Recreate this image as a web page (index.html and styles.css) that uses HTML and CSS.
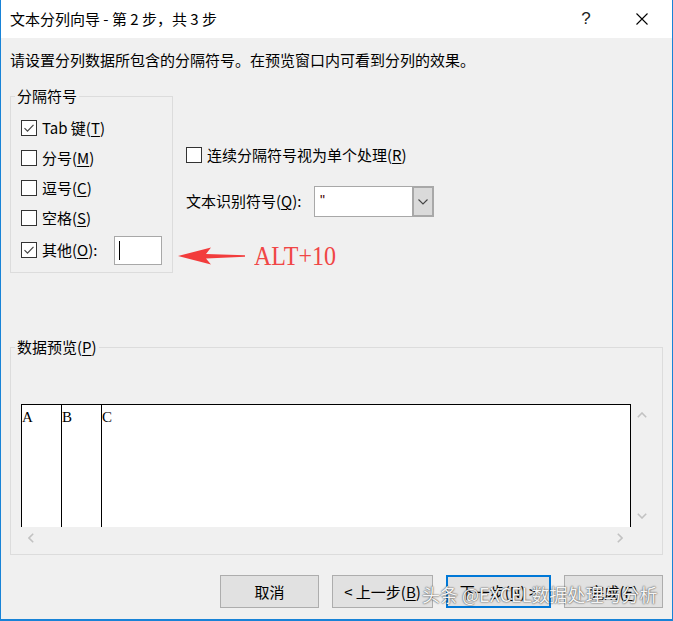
FILE: index.html
```html
<!DOCTYPE html>
<html lang="zh-CN">
<head>
<meta charset="utf-8">
<title>文本分列向导</title>
<link rel="stylesheet" href="styles.css">
</head>
<body>
<div class="window">
  <div class="titlebar">
    <span class="title">文本分列向导 - 第 2 步，共 3 步</span>
    <span class="tb-btn help">?</span>
    <span class="tb-btn close"><svg width="12" height="12" viewBox="0 0 12 12"><path d="M0.5 0.5L11.5 11.5M11.5 0.5L0.5 11.5" stroke="#000" stroke-width="1.1" fill="none"/></svg></span>
  </div>
  <div class="content">
    <p class="intro">请设置分列数据所包含的分隔符号。在预览窗口内可看到分列的效果。</p>
    <div class="options">
      <fieldset class="group delims">
        <legend>分隔符号</legend>
        <div class="check"><span class="box"><svg width="14" height="14" viewBox="0 0 14 14"><path d="M2.5 7.2L5.5 10.2L11.5 3.8" stroke="#444" stroke-width="1.2" fill="none"/></svg></span>Tab 键(<u>T</u>)</div>
        <div class="check"><span class="box"></span>分号(<u>M</u>)</div>
        <div class="check"><span class="box"></span>逗号(<u>C</u>)</div>
        <div class="check"><span class="box"></span>空格(<u>S</u>)</div>
        <div class="check other"><span class="box"><svg width="14" height="14" viewBox="0 0 14 14"><path d="M2.5 7.2L5.5 10.2L11.5 3.8" stroke="#444" stroke-width="1.2" fill="none"/></svg></span>其他(<u>O</u>):<span class="textbox"><span class="caret"></span></span></div>
      </fieldset>
      <div class="right">
        <div class="check consecutive"><span class="box"></span>连续分隔符号视为单个处理(<u>R</u>)</div>
        <div class="qualifier">
          <span class="qlabel">文本识别符号(<u>Q</u>):</span>
          <div class="combo">
            <span class="value">"</span>
            <span class="drop"><svg width="10" height="6" viewBox="0 0 10 6"><path d="M0.5 0.5L5 5L9.5 0.5" stroke="#444" stroke-width="1.1" fill="none"/></svg></span>
          </div>
        </div>
      </div>
    </div>
    <fieldset class="group preview">
      <legend>数据预览(<u>P</u>)</legend>
      <div class="pgrid">
        <div class="sheet">
          <div class="col">A</div>
          <div class="col">B</div>
          <div class="col last">C</div>
        </div>
        <div class="vscroll">
          <svg width="10" height="6" viewBox="0 0 10 6"><path d="M0.8 5.2L5 1L9.2 5.2" stroke="#c2c2c2" stroke-width="1.6" fill="none"/></svg>
          <svg width="10" height="6" viewBox="0 0 10 6"><path d="M0.8 0.8L5 5L9.2 0.8" stroke="#c2c2c2" stroke-width="1.6" fill="none"/></svg>
        </div>
        <div class="hscroll">
          <svg width="6" height="10" viewBox="0 0 6 10"><path d="M5.2 0.8L1 5L5.2 9.2" stroke="#c2c2c2" stroke-width="1.6" fill="none"/></svg>
          <svg width="6" height="10" viewBox="0 0 6 10"><path d="M0.8 0.8L5 5L0.8 9.2" stroke="#c2c2c2" stroke-width="1.6" fill="none"/></svg>
        </div>
        <div class="corner"></div>
      </div>
    </fieldset>
    <div class="buttons">
      <button class="btn w99">取消</button>
      <button class="btn w101">&lt; 上一步(<u>B</u>)</button>
      <button class="btn w105 focused">下一步(<u>N</u>) &gt;</button>
      <button class="btn w99">完成(<u>F</u>)</button>
    </div>
  </div>
  <div class="annotation">
    <svg width="70" height="20" viewBox="0 0 70 20"><polygon points="1,10 34,1.5 29,8 68,9.2 68,10.8 29,12.5 34,18.5" fill="#f23c3c"/></svg>
    <span class="note">ALT+10</span>
  </div>
  <div class="watermark">头条 @EXCEL数据处理与分析</div>
</div>
</body>
</html>
```
FILE: styles.css
```css
* { box-sizing: border-box; }
html, body { margin: 0; padding: 0; background: #f0f0f0; }
body {
  font-family: "Noto Sans CJK SC", "Noto Sans", sans-serif;
  font-size: 15px;
  color: #000;
}
u { text-decoration-thickness: 1px; text-underline-offset: 2px; }

.window {
  position: relative;
  width: 673px;
  height: 621px;
  background: #f0f0f0;
  border-left: 1px solid #1883d7;
  border-right: 1px solid #1883d7;
  border-bottom: 2px solid #1883d7;
  display: flex;
  flex-direction: column;
  overflow: hidden;
}

.titlebar {
  height: 38px;
  background: #fff;
  display: flex;
  align-items: center;
  padding-left: 9px;
  padding-right: 2px;
  flex: none;
}
.title { line-height: 20px; }
.tb-btn {
  width: 56px;
  height: 38px;
  display: flex;
  align-items: center;
  justify-content: center;
}
.help {
  margin-left: auto;
  font-family: "Liberation Sans", sans-serif;
  font-size: 17px;
  font-weight: 300;
  color: #222;
}

.content {
  padding: 0 9px;
  flex: 1;
  display: flex;
  flex-direction: column;
}
.intro {
  margin: 12px 0 0;
  line-height: 20px;
}

.options {
  display: flex;
  align-items: flex-start;
  margin-top: 16px;
}

.group {
  margin: 0;
  border: 1px solid #dcdcdc;
  min-width: 0;
}
.group legend {
  padding: 0 2px;
  margin-left: -6px;
  line-height: 20px;
  height: 20px;
}

.delims {
  width: 163px;
  padding: 7px 10px 7px 10px;
}
.check {
  display: flex;
  align-items: center;
  height: 30px;
  line-height: 20px;
  white-space: nowrap;
}
.check.other { margin-top: 2px; }
.box {
  width: 16px;
  height: 16px;
  border: 1px solid #333;
  background: #fff;
  margin-right: 5px;
  flex: none;
  display: flex;
  align-items: center;
  justify-content: center;
}
.textbox {
  margin-left: auto;
  width: 48px;
  height: 29px;
  background: #fff;
  border: 1px solid #a8a8a8;
  display: flex;
  align-items: center;
  padding-left: 4px;
}
.caret {
  width: 1px;
  height: 19px;
  background: #000;
}

.right {
  margin-left: 13px;
}
.consecutive { margin-top: 54px; }
.qualifier {
  margin-top: 15px;
  height: 32px;
  display: flex;
  align-items: center;
}
.qlabel {
  width: 128px;
  line-height: 20px;
  white-space: nowrap;
}
.combo {
  width: 120px;
  height: 31px;
  border: 1px solid #a8a8a8;
  background: #fff;
  display: flex;
  align-items: stretch;
}
.combo .value {
  padding-left: 5px;
  line-height: 26px;
  color: #400;
  font-family: "Liberation Sans", sans-serif;
  font-size: 14px;
}
.combo .drop {
  margin-left: auto;
  width: 21px;
  background: #dadada;
  border-left: 1px solid #a8a8a8;
  box-shadow: inset 0 0 0 1px #a8a8a8;
  display: flex;
  align-items: center;
  justify-content: center;
  padding-top: 1px;
}

.preview {
  margin-top: 64px;
  padding: 47px 9px 6px 10px;
}
.pgrid {
  display: grid;
  grid-template-columns: 610px 21px;
  grid-template-rows: 123px 21px;
}
.sheet {
  background: #fff;
  border: 1px solid #000;
  border-bottom: none;
  display: flex;
}
.col {
  width: 40px;
  border-right: 1px solid #000;
  font-family: "Liberation Serif", serif;
  font-size: 15px;
  line-height: 16px;
  padding-top: 4px;
  padding-left: 0;
  font-weight: normal;
}
.col.last { border-right: none; flex: 1; }
.vscroll {
  display: flex;
  flex-direction: column;
  align-items: center;
  justify-content: space-between;
  padding: 8px 0 8px;
}
.hscroll {
  display: flex;
  align-items: center;
  justify-content: space-between;
  padding: 0 8px 0 7px;
}

.buttons {
  margin-top: 20px;
  display: flex;
  justify-content: flex-end;
  gap: 13px;
}
.btn {
  height: 33px;
  background: #e1e1e1;
  border: 1px solid #adadad;
  font-family: inherit;
  font-size: 15px;
  color: #000;
  padding: 0;
}
.btn.focused { border: 2px solid #0078d7; }
.w99 { width: 99px; }
.w101 { width: 101px; }
.w105 { width: 105px; }

.annotation {
  position: absolute;
  left: 176px;
  top: 245px;
  display: flex;
  align-items: center;
  gap: 7px;
}
.note {
  font-family: "Liberation Serif", serif;
  font-size: 24px;
  line-height: 22px;
  color: #f04646;
  transform: scaleY(1.1);
}

.watermark {
  position: absolute;
  left: 421px;
  top: 582px;
  font-size: 18px;
  line-height: 24px;
  color: rgba(255, 255, 255, 0.95);
  text-shadow: 0 0 1px #555, 0 0 2px rgba(0, 0, 0, 0.6);
  white-space: nowrap;
}
```
